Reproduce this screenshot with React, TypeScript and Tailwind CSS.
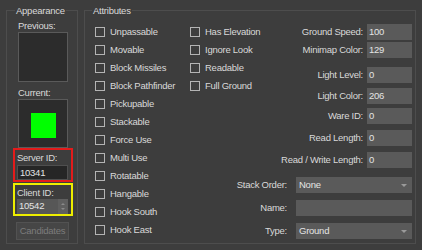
import React from 'react'

function Check({ label }: { label: string }) {
  return (
    <div className="flex h-[18px] items-center gap-[5px] whitespace-nowrap">
      <span className="h-[10px] w-[10px] shrink-0 border border-[#b4b4b4] bg-[#3d3d3d]" />
      <span>{label}</span>
    </div>
  )
}

function Field({ label, value, className }: { label: string; value: string; className: string }) {
  return (
    <div className={'flex items-center gap-[4px] whitespace-nowrap ' + className}>
      <span>{label}</span>
      <div className="h-[16px] w-[45px] bg-[#5a5a5a] pl-[2px] leading-[16px] text-[#e4e4e4]">{value}</div>
    </div>
  )
}

function Combo({ label, value, className }: { label: string; value: string; className: string }) {
  return (
    <div className={'flex items-center gap-[9px] whitespace-nowrap ' + className}>
      <span>{label}</span>
      <div className="flex h-[16px] w-[116px] items-center justify-between bg-[#5a5a5a] pl-[3px] pr-[5px] text-[#e4e4e4]">
        <span>{value}</span>
        {value !== '' && (
          <span className="h-0 w-0 border-x-[3px] border-t-[3px] border-x-transparent border-t-[#9a9a9a]" />
        )}
      </div>
    </div>
  )
}

const col1 = [
  'Unpassable',
  'Movable',
  'Block Missiles',
  'Block Pathfinder',
  'Pickupable',
  'Stackable',
  'Force Use',
  'Multi Use',
  'Rotatable',
  'Hangable',
  'Hook South',
  'Hook East',
]

const col2 = ['Has Elevation', 'Ignore Look', 'Readable', 'Full Ground']

export default function App() {
  return (
    <div className="flex h-[250px] w-[422px] gap-[6px] bg-[#3d3d3d] pl-[6px] pt-[4px] font-['Liberation_Sans',Arial,sans-serif] text-[9.5px] tracking-[-0.25px] text-[#d9d9d9]">
      {/* Appearance */}
      <fieldset className="h-[240px] w-[72px] shrink-0 border border-[#4d4d4d]">
        <legend className="ml-[8px] px-[1px] leading-[13px]">Appearance</legend>
        <div className="pl-[11px] pt-[3px] leading-[12px]">Previous:</div>
        <div className="ml-[11px] h-[50px] w-[50px] border border-[#5a5a5a] bg-[#2c2c2c]" />
        <div className="ml-[11px] mt-[5px] leading-[12px]">Current:</div>
        <div className="ml-[11px] flex h-[49px] w-[50px] items-center justify-center border border-[#5a5a5a] bg-[#2c2c2c]">
          <div className="mt-[4px] h-[25px] w-[25px] bg-[#00ff00]" />
        </div>

        <div className="ml-[6px] h-[34px] w-[60px] border-2 border-[#e31b1b] px-[2px] pt-[2px]">
          <div className="leading-[12px]">Server ID:</div>
          <div className="mt-[1px] h-[15px] w-[51px] border border-[#4f4f4f] bg-[#262626] pl-[2px] leading-[13px] text-[#e4e4e4]">
            10341
          </div>
        </div>
        <div className="ml-[6px] mt-[1px] h-[33px] w-[60px] border-2 border-[#eeee00] px-[2px] pt-[2px]">
          <div className="leading-[12px]">Client ID:</div>
          <div className="flex h-[15px] w-[51px] items-center justify-between bg-[#575757] pl-[2px] text-[#e4e4e4]">
            <span>10542</span>
            <div className="flex h-[15px] w-[10px] flex-col items-center justify-center gap-[3px] bg-[#5f5f5f]">
              <span className="h-0 w-0 border-x-[2px] border-b-[2px] border-x-transparent border-b-[#8a8a8a]" />
              <span className="h-0 w-0 border-x-[2px] border-t-[2px] border-x-transparent border-t-[#8a8a8a]" />
            </div>
          </div>
        </div>
        <div className="ml-[9px] mt-[6px] flex h-[18px] w-[53px] items-center justify-center border border-[#525252] bg-[#464646] text-[#7c7c7c]">
          Candidates
        </div>
      </fieldset>

      {/* Attributes */}
      <fieldset className="h-[240px] w-[332px] shrink-0 border border-[#4d4d4d]">
        <legend className="ml-[7px] px-[1px] leading-[13px]">Attributes</legend>
        <div className="flex">
          <div className="ml-[10px] mt-[6px] flex w-[95px] flex-col">
            {col1.map((l) => (
              <Check key={l} label={l} />
            ))}
          </div>
          <div className="flex w-[222px] flex-col">
            <div className="flex">
              <div className="mt-[6px] flex flex-col">
                {col2.map((l) => (
                  <Check key={l} label={l} />
                ))}
              </div>
              <div className="flex flex-1 flex-col items-end">
                <Field label="Ground Speed:" value="100" className="mt-[7px]" />
                <Field label="Minimap Color:" value="129" className="mt-[2px]" />
                <Field label="Light Level:" value="0" className="mt-[9px]" />
                <Field label="Light Color:" value="206" className="mt-[5px]" />
              </div>
            </div>
            <div className="flex flex-col items-end">
              <Field label="Ware ID:" value="0" className="mt-[4px]" />
              <Field label="Read Length:" value="0" className="mt-[6px]" />
              <Field label="Read / Write Length:" value="0" className="mt-[6px]" />
              <Combo label="Stack Order:" value="None" className="mt-[9px]" />
              <Combo label="Name:" value="" className="mt-[7px]" />
              <Combo label="Type:" value="Ground" className="mt-[7px]" />
            </div>
          </div>
        </div>
      </fieldset>
    </div>
  )
}
